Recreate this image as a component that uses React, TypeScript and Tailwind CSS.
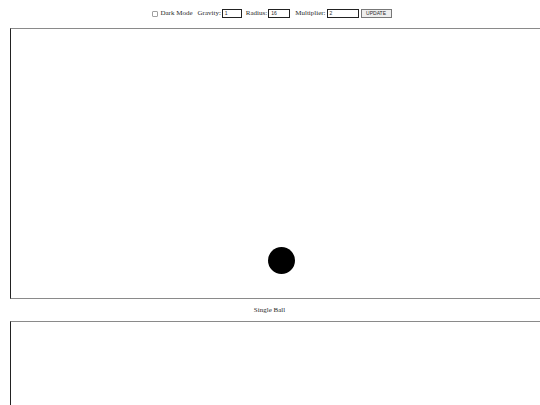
export default function App() {
  return (
    <div className="w-[540px] h-[405px] overflow-hidden bg-white text-[#2a2a2a] font-['Liberation_Serif',serif]">
      {/* controls */}
      <div className="h-[28px] flex items-center justify-center whitespace-nowrap text-[7px] pl-[4px] pb-[1px]">
        <span className="w-[6px] h-[6px] border border-[#a0a0a0] rounded-[1px] mr-[2px]" />
        <span>Dark Mode</span>
        <span className="ml-[5px]">Gravity:</span>
        <div className="ml-[1px] w-[20px] h-[9px] border border-[#222] text-[5px] font-['Liberation_Sans',sans-serif] pl-[2px] leading-[7px]">1</div>
        <span className="ml-[4px]">Radius:</span>
        <div className="ml-[1px] w-[22px] h-[9px] border border-[#222] text-[5px] font-['Liberation_Sans',sans-serif] pl-[2px] leading-[7px]">16</div>
        <span className="ml-[5px]">Multiplier:</span>
        <div className="ml-[1px] w-[32px] h-[9px] border border-[#222] text-[5px] font-['Liberation_Sans',sans-serif] pl-[2px] leading-[7px]">2</div>
        <button className="ml-[2px] w-[31px] h-[9px] border border-[#777] bg-[#eeeeee] text-[5px] font-['Liberation_Sans',sans-serif] leading-[7px]">UPDATE</button>
      </div>

      {/* first canvas */}
      <div className="ml-[10px] w-[600px] h-[271px] border-l border-l-[#222] border-y border-y-[#8a8a8a] flex items-end">
        <div className="ml-[257px] mb-[24px] w-[27px] h-[27px] rounded-full bg-black" />
      </div>

      <div className="h-[22px] flex items-center justify-center text-[7px] pr-[1px]">Single Ball</div>

      {/* second canvas */}
      <div className="ml-[10px] w-[600px] h-[271px] border-l border-l-[#222] border-t border-t-[#8a8a8a]" />
    </div>
  );
}
